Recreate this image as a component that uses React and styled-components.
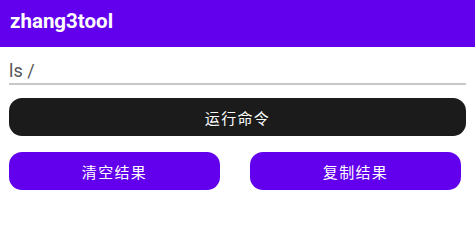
import React, { useState } from "react";
import styled, { createGlobalStyle } from "styled-components";

const GlobalStyle = createGlobalStyle`
  html, body {
    margin: 0;
    padding: 0;
    background: #fff;
    font-family: Roboto, "Noto Sans CJK SC", sans-serif;
  }
`;

export default function App() {
  const [command, setCommand] = useState("ls /");

  return (
    <>
      <GlobalStyle />
      <Page>
        <AppBar>zhang3tool</AppBar>
        <Content>
          <CommandInput
            value={command}
            onChange={(e) => setCommand(e.target.value)}
          />
          <ActionButton $dark>运行命令</ActionButton>
          <ButtonRow>
            <ActionButton>清空结果</ActionButton>
            <ActionButton>复制结果</ActionButton>
          </ButtonRow>
        </Content>
      </Page>
    </>
  );
}

const Page = styled.div`
  width: 475px;
  min-height: 228px;
  background: #fff;
`;

const AppBar = styled.div`
  height: 47px;
  background: #6200ee;
  color: #fff;
  display: flex;
  align-items: center;
  padding: 0 10px 6px;
  box-sizing: border-box;
  font-size: 20.5px;
  font-weight: 700;
`;

const Content = styled.div`
  display: flex;
  flex-direction: column;
  padding: 11px 9px 0 9px;
`;

const CommandInput = styled.input`
  height: 25px;
  border: none;
  border-bottom: 2px solid #c8c8c8;
  outline: none;
  padding: 0;
  margin: 0 0 13px;
  font-family: Roboto, sans-serif;
  font-size: 18px;
  color: #555;
  background: transparent;
`;

const ActionButton = styled.button`
  flex: none;
  height: 38px;
  border: none;
  border-radius: 13px;
  background: ${(p) => (p.$dark ? "#1b1b1b" : "#6200ee")};
  color: #fff;
  font-family: Roboto, "Noto Sans CJK SC", sans-serif;
  font-size: 15px;
  letter-spacing: 0.09em;
  cursor: pointer;
`;

const ButtonRow = styled.div`
  display: flex;
  gap: 30px;
  margin-top: 16px;
  padding-right: 5px;

  & > ${ActionButton} {
    flex: 1 1 0;
  }
`;
